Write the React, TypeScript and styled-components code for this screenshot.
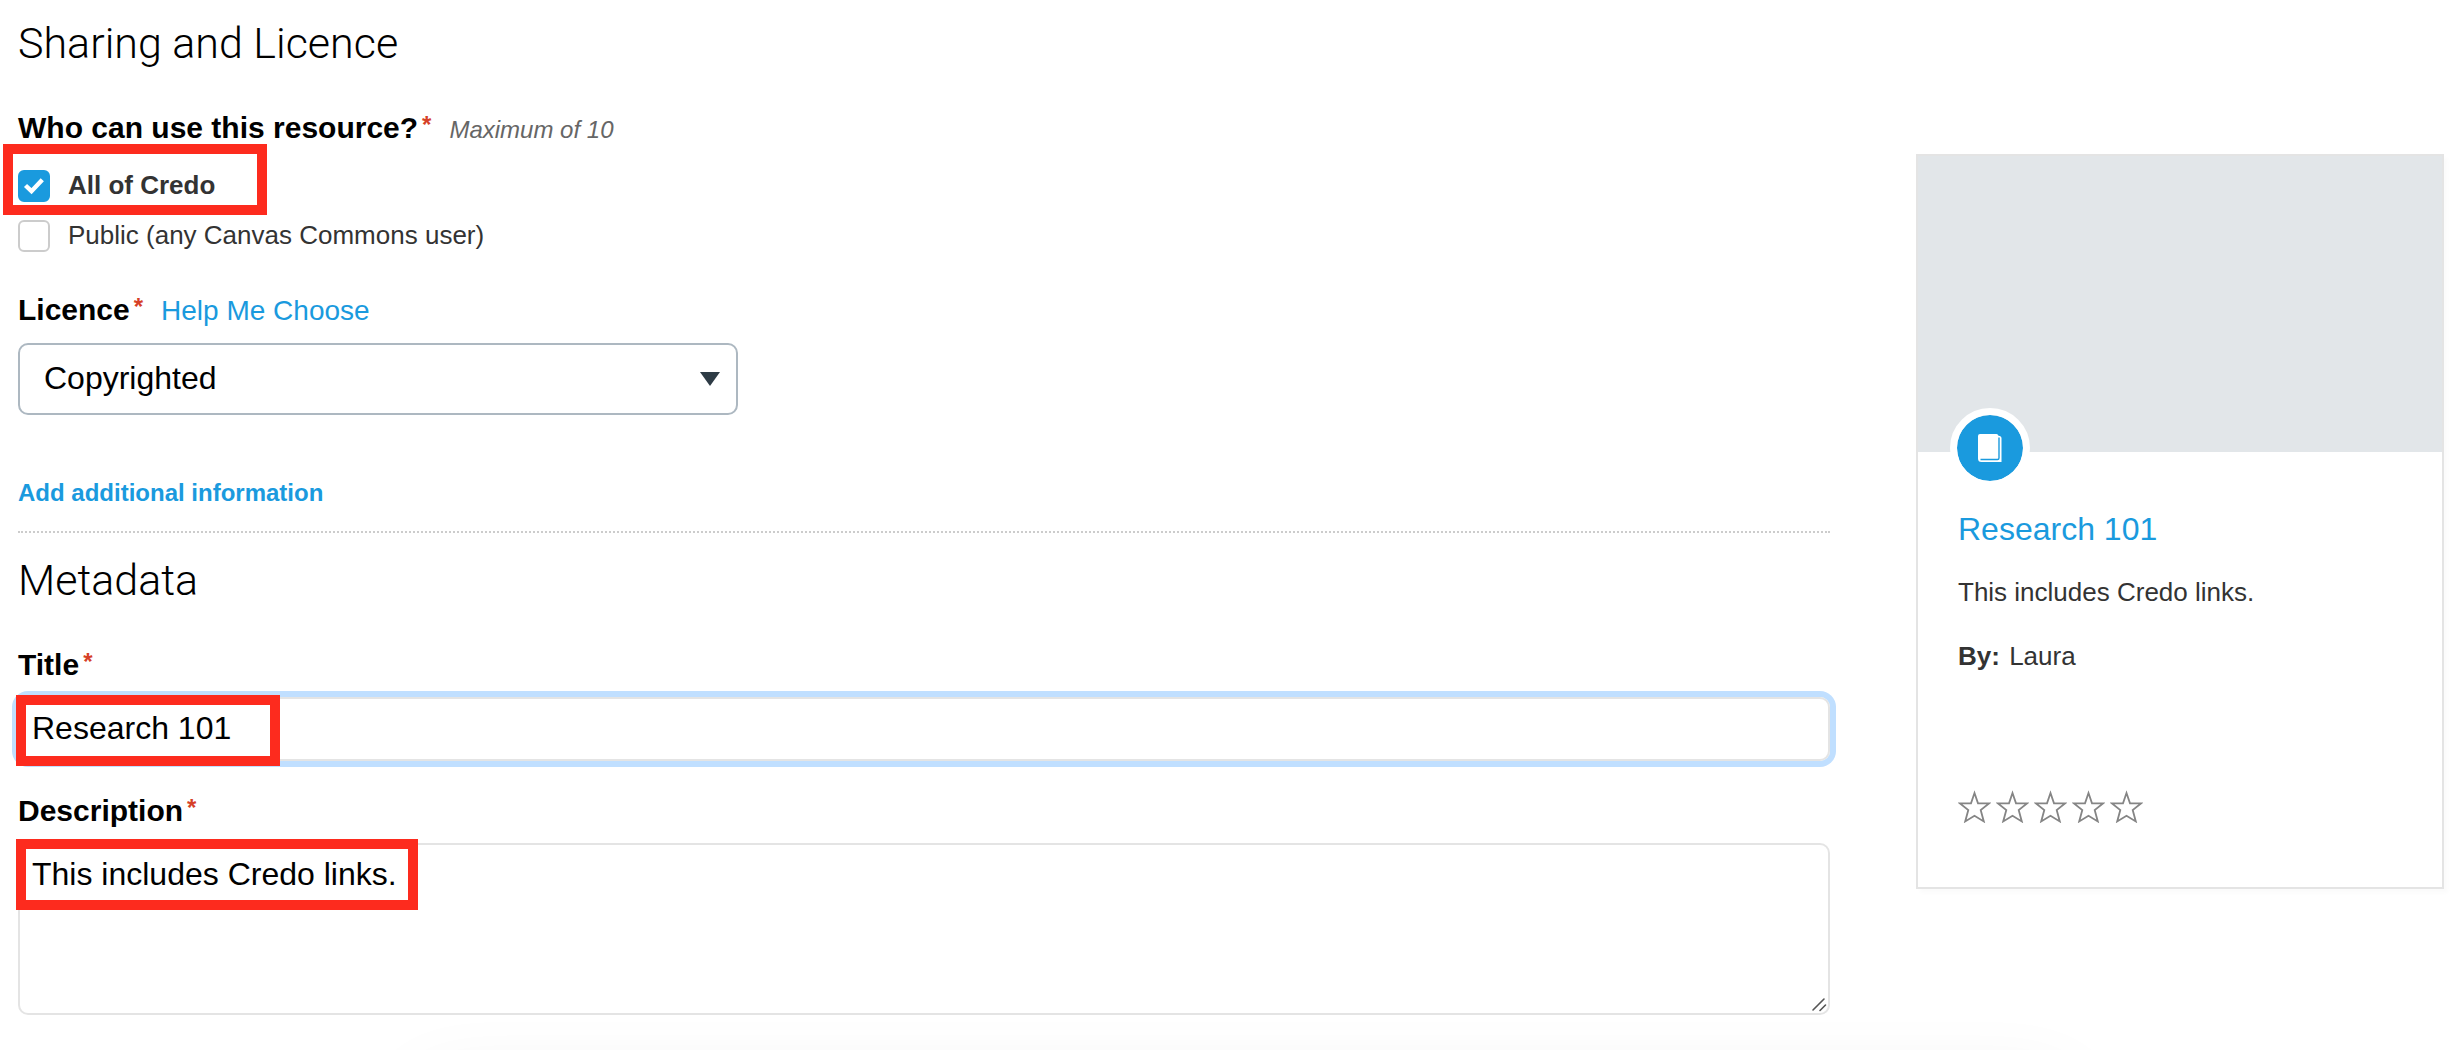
import React, { useState } from "react";
import styled, { createGlobalStyle, css } from "styled-components";

const blue = "#1a9ade";
const ink = "#333333";
const line = "#e4e4e4";

const GlobalStyle = createGlobalStyle`
  *, *::before, *::after { box-sizing: border-box; }
  body {
    margin: 0;
    background: #ffffff;
    color: #000000;
    font-family: "Liberation Sans", Arial, Helvetica, sans-serif;
    font-size: 26px;
  }
`;

const Page = styled.div`
  position: relative;
  min-height: 100vh;
  overflow: hidden;
  display: grid;
  grid-template-columns: minmax(0, 1fr) 528px;
  column-gap: 86px;
  align-items: start;
  padding: 16px 18px 36px;
`;

const Section = styled.section<{ $divided?: boolean }>`
  display: flex;
  flex-direction: column;
  ${({ $divided }) =>
    $divided &&
    css`
      margin-bottom: 20px;
      padding-bottom: 23px;
      border-bottom: 2px dotted #cccccc;
    `}
`;

const Heading = styled.h2`
  margin: 0 0 40px;
  font-family: Roboto, "Liberation Sans", sans-serif;
  font-size: 43px;
  font-weight: 300;
  line-height: 54px;
`;

const Fieldset = styled.fieldset`
  margin: 0;
  padding: 0;
  border: 0;
  min-width: 0;
`;

const LabelRow = styled.div`
  display: flex;
  align-items: baseline;
  gap: 18px;
  height: 36px;
  line-height: 36px;
`;

const FieldLabel = styled.label`
  font-size: 30px;
  font-weight: 700;
`;

const Required = styled.span`
  margin-left: 4px;
  color: #d64027;
  font-size: 24px;
  line-height: 0;
  vertical-align: 5px;
`;

const Hint = styled.span`
  color: #666666;
  font-size: 24px;
  font-style: italic;
`;

const TextLink = styled.a`
  color: ${blue};
  font-size: 28px;
  text-decoration: none;
`;

const Options = styled.div`
  margin: 15px 0 31px;
`;

const Anchor = styled.div`
  position: relative;
  display: flex;
`;

const Option = styled.label<{ $strong?: boolean }>`
  display: flex;
  align-items: center;
  gap: 18px;
  height: 50px;
  color: ${ink};
  font-weight: ${({ $strong }) => ($strong ? 700 : 400)};
  line-height: 30px;
`;

const OptionText = styled.span`
  padding-bottom: 2px;
`;

const Box = styled.span`
  display: grid;
  width: 32px;
  height: 32px;
  > * {
    grid-area: 1 / 1;
  }
  svg {
    pointer-events: none;
  }
`;

const Check = styled.input`
  appearance: none;
  width: 32px;
  height: 32px;
  margin: 0;
  border: 2px solid #cccccc;
  border-radius: 6px;
  background: #ffffff;
  &:checked {
    border-color: ${blue};
    background: ${blue};
  }
`;

const Highlight = styled.div<{ $left: number; $top: number; $width: number }>`
  position: absolute;
  left: ${({ $left }) => $left}px;
  top: ${({ $top }) => $top}px;
  width: ${({ $width }) => $width}px;
  height: 71px;
  border: 10px solid #fd2b1e;
  pointer-events: none;
`;

const SelectWrap = styled.div`
  display: grid;
  width: 720px;
  max-width: 100%;
  margin: 15px 0 63px;
  align-items: center;
  > * {
    grid-area: 1 / 1;
  }
  svg {
    justify-self: end;
    margin-right: 18px;
    pointer-events: none;
  }
`;

const Select = styled.select`
  appearance: none;
  width: 100%;
  height: 72px;
  padding: 0 60px 2px 24px;
  border: 2px solid #adb8c1;
  border-radius: 10px;
  background: #ffffff;
  color: #000000;
  font: inherit;
  font-size: 32px;
`;

const MoreButton = styled.button`
  align-self: flex-start;
  padding: 0;
  border: 0;
  background: none;
  color: ${blue};
  font: inherit;
  font-size: 24px;
  font-weight: 700;
  line-height: 30px;
`;

const Field = styled.div`
  position: relative;
  display: flex;
  margin: 14px 0 32px;
`;

const controlStyle = css`
  flex: 1;
  min-width: 0;
  border: 2px solid ${line};
  border-radius: 10px;
  background: transparent;
  color: #000000;
  font: inherit;
  font-size: 32px;
  line-height: 40px;
  outline: none;
`;

const TextInput = styled.input`
  ${controlStyle}
  height: 64px;
  padding: 0 12px 2px;
  box-shadow: 0 0 0 6px #c0dfff;
`;

const TextArea = styled.textarea`
  ${controlStyle}
  height: 172px;
  padding: 9px 12px;
  resize: none;
`;

const Grip = styled.svg`
  position: absolute;
  right: 3px;
  bottom: 3px;
  pointer-events: none;
`;

const Card = styled.aside`
  margin-top: 138px;
  border: 2px solid ${line};
  background: #ffffff;
  color: ${ink};
  box-shadow: 4px 4px 4px rgba(0, 0, 0, 0.02);
`;

const Cover = styled.div`
  position: relative;
  height: 296px;
  background: #e2e6e9;
`;

const Badge = styled.div`
  position: absolute;
  left: 32px;
  bottom: -36px;
  display: grid;
  place-items: center;
  width: 80px;
  height: 80px;
  border: 7px solid #ffffff;
  border-radius: 50%;
  background: ${blue};
  background-clip: padding-box;
`;

const CardBody = styled.div`
  padding: 57px 40px 64px;
`;

const CardTitle = styled.h3`
  margin: 0 0 27px;
  font-size: 32px;
  font-weight: 400;
  line-height: 40px;
  a {
    color: ${blue};
    text-decoration: none;
  }
`;

const CardText = styled.p`
  margin: 0 0 32px;
  font-size: 26px;
  line-height: 32px;
  b {
    margin-right: 2px;
  }
`;

const Stars = styled.div`
  display: flex;
  gap: 5px;
  margin-top: 118px;
`;

const PanelShade = styled.div`
  position: absolute;
  top: 100%;
  left: 17%;
  right: 16%;
  height: 80px;
  border-radius: 12px;
  box-shadow: 0 0 80px rgba(0, 0, 0, 0.07);
  pointer-events: none;
`;

function Star() {
  return (
    <svg width="33" height="33" viewBox="0 0 33 33" fill="none" stroke="#858585" strokeWidth="1.8" aria-hidden="true">
      <path d="M16.5 3 20 13.3 31 13.4 22.7 20 25.8 31.4 16.5 25.8 7.2 31.4 10.3 20 2 13.4 13 13.3Z" />
    </svg>
  );
}

export default function App() {
  const [all, setAll] = useState(true);
  const [open, setOpen] = useState(false);
  const [title, setTitle] = useState("Research 101");
  const [description, setDescription] = useState("This includes Credo links.");

  return (
    <>
      <GlobalStyle />
      <Page>
        <main>
          <Section $divided>
            <Heading>Sharing and Licence</Heading>
            <Fieldset aria-labelledby="audience">
              <LabelRow>
                <FieldLabel as="span" id="audience">
                  Who can use this resource?<Required>*</Required>
                </FieldLabel>
                <Hint>Maximum of 10</Hint>
              </LabelRow>
              <Options>
                <Anchor>
                  <Option $strong={all}>
                    <Box>
                      <Check type="checkbox" checked={all} onChange={(e) => setAll(e.target.checked)} />
                      <svg width="32" height="32" viewBox="0 0 32 32" fill="none" stroke="#ffffff" strokeWidth="4.4" aria-hidden="true">
                        <path d="M7.5 15.5 13.5 21.2 24.3 9.8" />
                      </svg>
                    </Box>
                    <OptionText>All of Credo</OptionText>
                  </Option>
                  <Highlight $left={-15} $top={-17} $width={264} />
                </Anchor>
                <Anchor>
                  <Option $strong={open}>
                    <Check type="checkbox" checked={open} onChange={(e) => setOpen(e.target.checked)} />
                    <OptionText>Public (any Canvas Commons user)</OptionText>
                  </Option>
                </Anchor>
              </Options>
            </Fieldset>
            <LabelRow>
              <FieldLabel htmlFor="licence">
                Licence<Required>*</Required>
              </FieldLabel>
              <TextLink href="#help">Help Me Choose</TextLink>
            </LabelRow>
            <SelectWrap>
              <Select id="licence" defaultValue="Copyrighted">
                <option>Copyrighted</option>
              </Select>
              <svg width="20" height="14" viewBox="0 0 20 14" fill="#2d3b45" aria-hidden="true">
                <path d="M0 0H20L10 14Z" />
              </svg>
            </SelectWrap>
            <MoreButton type="button">Add additional information</MoreButton>
          </Section>

          <Section>
            <Heading>Metadata</Heading>
            <LabelRow>
              <FieldLabel htmlFor="title">
                Title<Required>*</Required>
              </FieldLabel>
            </LabelRow>
            <Field>
              <TextInput id="title" type="text" value={title} onChange={(e) => setTitle(e.target.value)} />
              <Highlight $left={-2} $top={-2} $width={264} />
            </Field>
            <LabelRow>
              <FieldLabel htmlFor="description">
                Description<Required>*</Required>
              </FieldLabel>
            </LabelRow>
            <Field>
              <TextArea id="description" value={description} onChange={(e) => setDescription(e.target.value)} />
              <Grip width="16" height="16" viewBox="0 0 16 16" fill="none" stroke="#555555" strokeWidth="1.6" strokeLinecap="round" aria-hidden="true">
                <path d="M2 14 13 3M9 14.5 14.5 9" />
              </Grip>
              <Highlight $left={-2} $top={-4} $width={402} />
            </Field>
          </Section>
        </main>

        <Card>
          <Cover>
            <Badge>
              <svg width="24" height="28" viewBox="0 0 24 28" aria-hidden="true">
                <path d="M2 0H18.500Q20 0 20.500 1.700L21.800 2Q23.500 2.300 23.500 4V28H3.500Q0 28 0 24.500V2Q0 0 2 0Z" fill="#ffffff" />
                <path d="M2.500 25.500H19.500Q21 25.500 21 24V3.500" fill="none" stroke={blue} strokeWidth="1.4" />
              </svg>
            </Badge>
          </Cover>
          <CardBody>
            <CardTitle>
              <a href="#resource">Research 101</a>
            </CardTitle>
            <CardText>This includes Credo links.</CardText>
            <CardText>
              <b>By:</b> Laura
            </CardText>
            <Stars role="img" aria-label="No ratings">
              {[1, 2, 3, 4, 5].map((n) => (
                <Star key={n} />
              ))}
            </Stars>
          </CardBody>
        </Card>
        <PanelShade />
      </Page>
    </>
  );
}
